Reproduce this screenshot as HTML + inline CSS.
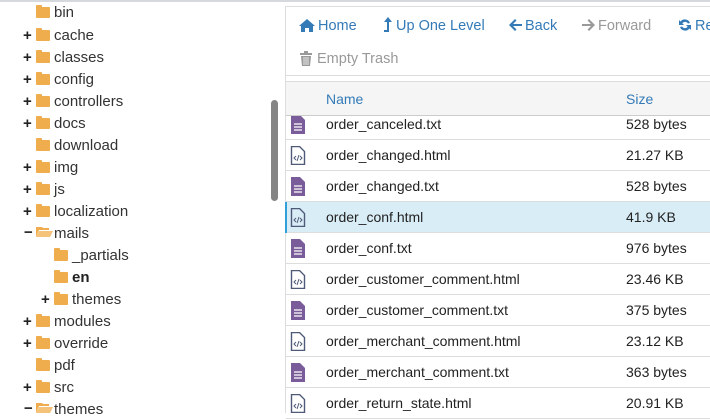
<!DOCTYPE html>
<html><head><meta charset="utf-8"><style>
*{margin:0;padding:0;box-sizing:border-box}
body{width:710px;height:413px;overflow:hidden;background:#fff;font-family:"Liberation Sans",sans-serif;position:relative;color:#333}
.topline{position:absolute;left:0;top:0;width:710px;height:2px;background:#d5d8dc}
.t{position:absolute;font-size:15px;line-height:20px;color:#333;white-space:nowrap;margin-top:1px}
.pl{position:absolute;font-size:15px;font-weight:bold;color:#222;line-height:20px;margin-top:1px}
.fo{position:absolute;width:14px;height:11px;background:#f0ad4e;border-radius:1px}
.fo:before{content:"";position:absolute;left:0;top:-2px;width:6px;height:3px;background:#f0ad4e;border-radius:1px 1px 0 0}
.sb{position:absolute;left:271px;top:100px;width:7px;height:101px;background:#858585;border-radius:4px}
.vline{position:absolute;left:285px;top:6px;width:1px;height:407px;background:#ddd}
.tb{position:absolute;left:285px;top:6px;width:430px;height:70px;border:1px solid #ddd}
.btn{position:absolute;font-size:14.5px;color:#337ab7;white-space:nowrap;line-height:20px;margin-top:2px}
.hd{position:absolute;left:286px;top:81px;width:424px;height:35px;background:#f5f5f5;border-top:1px solid #ddd;border-bottom:1px solid #ccc}
.hd span{position:absolute;top:9px;font-size:14px;color:#337ab7}
.row{position:absolute;left:286px;width:424px;height:31px;border-bottom:1px solid #ddd}
.row .n{position:absolute;left:40px;top:7px;font-size:14px;color:#222}
.row .s{position:absolute;left:340px;top:7px;font-size:14px;color:#222}
.row svg{position:absolute;left:4px;top:6px}
.sel{background:#d9edf7}
.sel:before{content:"";position:absolute;left:-1px;top:0;width:2px;height:31px;background:#31a0d8}
</style></head><body>
<div class="topline"></div>
<div class="sb"></div>
<div class="vline"></div>

<div class="fo" style="left:36px;top:7px"></div><div class="t" style="left:54px;top:2px">bin</div>
<div class="pl" style="left:23px;top:25px">+</div><div class="fo" style="left:36px;top:30px"></div><div class="t" style="left:54px;top:25px">cache</div>
<div class="pl" style="left:23px;top:47px">+</div><div class="fo" style="left:36px;top:52px"></div><div class="t" style="left:54px;top:47px">classes</div>
<div class="pl" style="left:23px;top:69px">+</div><div class="fo" style="left:36px;top:74px"></div><div class="t" style="left:54px;top:69px">config</div>
<div class="pl" style="left:23px;top:91px">+</div><div class="fo" style="left:36px;top:96px"></div><div class="t" style="left:54px;top:91px">controllers</div>
<div class="pl" style="left:23px;top:113px">+</div><div class="fo" style="left:36px;top:118px"></div><div class="t" style="left:54px;top:113px">docs</div>
<div class="fo" style="left:36px;top:140px"></div><div class="t" style="left:54px;top:135px">download</div>
<div class="pl" style="left:23px;top:157px">+</div><div class="fo" style="left:36px;top:162px"></div><div class="t" style="left:54px;top:157px">img</div>
<div class="pl" style="left:23px;top:179px">+</div><div class="fo" style="left:36px;top:184px"></div><div class="t" style="left:54px;top:179px">js</div>
<div class="pl" style="left:23px;top:201px">+</div><div class="fo" style="left:36px;top:206px"></div><div class="t" style="left:54px;top:201px">localization</div>
<div class="pl" style="left:24px;top:222px">−</div>
<svg style="position:absolute;left:36px;top:226px" width="17" height="12"><path d="M0 1h6l1 1h6v2H3L0 11z" fill="#f0ad4e"/><path d="M3 5h14l-3 6H0z" fill="#f5c27a"/></svg>
<div class="t" style="left:54px;top:223px">mails</div>
<div class="fo" style="left:54px;top:250px"></div><div class="t" style="left:72px;top:245px">_partials</div>
<div class="fo" style="left:54px;top:272px"></div><div class="t" style="left:72px;top:267px;font-weight:bold;color:#222">en</div>
<div class="pl" style="left:41px;top:289px">+</div><div class="fo" style="left:54px;top:294px"></div><div class="t" style="left:72px;top:289px">themes</div>
<div class="pl" style="left:23px;top:311px">+</div><div class="fo" style="left:36px;top:316px"></div><div class="t" style="left:54px;top:311px">modules</div>
<div class="pl" style="left:23px;top:333px">+</div><div class="fo" style="left:36px;top:338px"></div><div class="t" style="left:54px;top:333px">override</div>
<div class="fo" style="left:36px;top:360px"></div><div class="t" style="left:54px;top:355px">pdf</div>
<div class="pl" style="left:23px;top:377px">+</div><div class="fo" style="left:36px;top:382px"></div><div class="t" style="left:54px;top:377px">src</div>
<div class="pl" style="left:24px;top:398px">−</div>
<svg style="position:absolute;left:36px;top:402px" width="17" height="12"><path d="M0 1h6l1 1h6v2H3L0 11z" fill="#f0ad4e"/><path d="M3 5h14l-3 6H0z" fill="#f5c27a"/></svg>
<div class="t" style="left:54px;top:399px">themes</div>

<div class="tb"></div>
<svg style="position:absolute;left:299px;top:18px" width="16" height="14"><path d="M8 1L0 8h2v6h4v-4h4v4h4V8h2z" fill="#337ab7"/></svg>
<div class="btn" style="left:318px;top:14px">Home</div>
<svg style="position:absolute;left:383px;top:17px" width="9" height="16"><path d="M5 0L9 5H6v10H1v-2h3V5H1z" fill="#337ab7"/></svg>
<div class="btn" style="left:396px;top:14px">Up One Level</div>
<svg style="position:absolute;left:509px;top:19px" width="13" height="12"><path d="M6 0L0 6l6 6 1.5-1.5L4 7h9V5H4l3.5-3.5z" fill="#337ab7"/></svg>
<div class="btn" style="left:525px;top:14px">Back</div>
<svg style="position:absolute;left:582px;top:19px" width="13" height="12"><path d="M7 0l6 6-6 6-1.5-1.5L9 7H0V5h9L5.5 1.5z" fill="#999"/></svg>
<div class="btn" style="left:598px;top:14px;color:#999">Forward</div>
<svg style="position:absolute;left:678px;top:18px" width="14" height="14"><path d="M12 5A5.5 5.5 0 0 0 2.5 3.5L1 2v5h5L4.3 5.3A3.5 3.5 0 0 1 10 5.5zM2 9a5.5 5.5 0 0 0 9.5 1.5L13 12V7H8l1.7 1.7A3.5 3.5 0 0 1 4 8.5z" fill="#337ab7"/></svg>
<div class="btn" style="left:695px;top:14px">Re</div>
<svg style="position:absolute;left:300px;top:51px" width="12" height="15"><path d="M0 2h12v2H0zM4 0h4v2H4zM1 5h10l-1 10H2z" fill="#999"/><path d="M4 6v8M6 6v8M8 6v8" stroke="#fff" stroke-width="0.8"/></svg>
<div class="btn" style="left:317px;top:47px;color:#999">Empty Trash</div>

<div style="position:absolute;left:286px;top:116px;width:424px;height:297px;overflow:hidden">
 <div style="position:absolute;left:-286px;top:-116px;width:710px;height:413px">
 <div class="row" style="top:109px"><svg width="16" height="19"><path d="M1 0h9l5 5v14H1z" fill="#7b5c9a"/><path d="M4 9h8M4 12h8M4 15h8" stroke="#fff" stroke-width="1.2"/></svg><span class="n">order_canceled.txt</span><span class="s">528 bytes</span></div>
 </div>
</div>
<div class="hd"><span style="left:40px">Name</span><span style="left:340px">Size</span></div>

<div class="row" style="top:140px"><svg width="16" height="19"><path d="M1.5 .5h8l5 5v13h-13z" fill="none" stroke="#4e5a78" stroke-width="1.4"/><path d="M6 10l-2 2 2 2M10 10l2 2-2 2M9 9l-2 6" stroke="#4e5a78" stroke-width="1" fill="none"/></svg><span class="n">order_changed.html</span><span class="s">21.27 KB</span></div>
<div class="row" style="top:171px"><svg width="16" height="19"><path d="M1 0h9l5 5v14H1z" fill="#7b5c9a"/><path d="M4 9h8M4 12h8M4 15h8" stroke="#fff" stroke-width="1.2"/></svg><span class="n">order_changed.txt</span><span class="s">528 bytes</span></div>
<div class="row sel" style="top:202px"><svg width="16" height="19"><path d="M1.5 .5h8l5 5v13h-13z" fill="none" stroke="#4e5a78" stroke-width="1.4"/><path d="M6 10l-2 2 2 2M10 10l2 2-2 2M9 9l-2 6" stroke="#4e5a78" stroke-width="1" fill="none"/></svg><span class="n">order_conf.html</span><span class="s">41.9 KB</span></div>
<div class="row" style="top:233px"><svg width="16" height="19"><path d="M1 0h9l5 5v14H1z" fill="#7b5c9a"/><path d="M4 9h8M4 12h8M4 15h8" stroke="#fff" stroke-width="1.2"/></svg><span class="n">order_conf.txt</span><span class="s">976 bytes</span></div>
<div class="row" style="top:264px"><svg width="16" height="19"><path d="M1.5 .5h8l5 5v13h-13z" fill="none" stroke="#4e5a78" stroke-width="1.4"/><path d="M6 10l-2 2 2 2M10 10l2 2-2 2M9 9l-2 6" stroke="#4e5a78" stroke-width="1" fill="none"/></svg><span class="n">order_customer_comment.html</span><span class="s">23.46 KB</span></div>
<div class="row" style="top:295px"><svg width="16" height="19"><path d="M1 0h9l5 5v14H1z" fill="#7b5c9a"/><path d="M4 9h8M4 12h8M4 15h8" stroke="#fff" stroke-width="1.2"/></svg><span class="n">order_customer_comment.txt</span><span class="s">375 bytes</span></div>
<div class="row" style="top:326px"><svg width="16" height="19"><path d="M1.5 .5h8l5 5v13h-13z" fill="none" stroke="#4e5a78" stroke-width="1.4"/><path d="M6 10l-2 2 2 2M10 10l2 2-2 2M9 9l-2 6" stroke="#4e5a78" stroke-width="1" fill="none"/></svg><span class="n">order_merchant_comment.html</span><span class="s">23.12 KB</span></div>
<div class="row" style="top:357px"><svg width="16" height="19"><path d="M1 0h9l5 5v14H1z" fill="#7b5c9a"/><path d="M4 9h8M4 12h8M4 15h8" stroke="#fff" stroke-width="1.2"/></svg><span class="n">order_merchant_comment.txt</span><span class="s">363 bytes</span></div>
<div class="row" style="top:388px"><svg width="16" height="19"><path d="M1.5 .5h8l5 5v13h-13z" fill="none" stroke="#4e5a78" stroke-width="1.4"/><path d="M6 10l-2 2 2 2M10 10l2 2-2 2M9 9l-2 6" stroke="#4e5a78" stroke-width="1" fill="none"/></svg><span class="n">order_return_state.html</span><span class="s">20.91 KB</span></div>
</body></html>
